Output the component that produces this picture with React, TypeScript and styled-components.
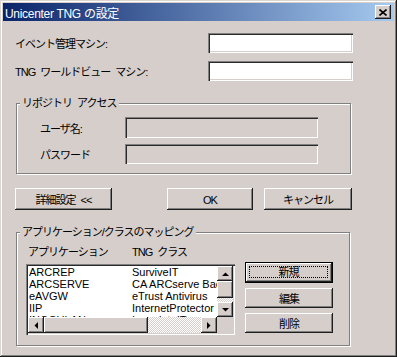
import React from 'react';
import styled, { createGlobalStyle } from 'styled-components';

const FACE = '#d6cecb';

const GlobalStyle = createGlobalStyle`
  html, body {
    margin: 0;
    padding: 0;
    background: ${FACE};
  }
  body {
    font-family: "Liberation Sans", "Noto Sans CJK JP", sans-serif;
    font-size: 11px;
    color: #000;
  }
`;

// ダイアログ外枠
const Window = styled.div`
  width: 397px;
  height: 357px;
  box-sizing: border-box;
  padding: 3px;
  background: ${FACE};
  box-shadow: inset -1px -1px #1e1e1e, inset 1px 1px #dcd6d2,
    inset -2px -2px #808080, inset 2px 2px #fff;
  display: flex;
  flex-direction: column;
`;

const TitleBar = styled.div`
  height: 18px;
  display: flex;
  align-items: center;
  justify-content: space-between;
  padding: 0 3px 0 2px;
  background: linear-gradient(to right, #0a246a, #a6caf0);
  color: #fff;
  font-size: 12px;
  letter-spacing: -0.3px;
`;

const Raised = `
  background: ${FACE};
  box-shadow: inset -1px -1px #1e1e1e, inset 1px 1px #fff,
    inset -2px -2px #808080, inset 2px 2px ${FACE};
`;

const JpText = `
  letter-spacing: -1px;
  word-spacing: 3px;
  line-height: 12px;
`;

const CloseBox = styled.div`
  width: 16px;
  height: 14px;
  ${Raised}
  display: flex;
  align-items: center;
  justify-content: center;
`;

const Body = styled.div`
  display: flex;
  flex-direction: column;
  padding: 12px 0 0 12px;
`;

const FieldRow = styled.div<{ $cols: string; $h: number }>`
  display: grid;
  grid-template-columns: ${p => p.$cols};
  align-items: center;
  height: ${p => p.$h}px;
`;

const Label = styled.span`
  ${JpText}
  padding-top: 2px;
`;

const TextBox = styled.div<{ $disabled?: boolean }>`
  height: 100%;
  box-sizing: border-box;
  background: ${p => (p.$disabled ? FACE : '#fff')};
  box-shadow: inset 1px 1px #808080, inset 2px 2px #2a2a2a,
    inset -1px -1px #fff, inset -2px -2px ${FACE};
`;

const Group = styled.div<{ $w: number; $h: number; $top: number }>`
  width: ${p => p.$w}px;
  height: ${p => p.$h}px;
  margin: ${p => p.$top}px 0 0 1px;
  box-sizing: border-box;
  border: 1px solid #808080;
  box-shadow: inset 1px 1px #fff, 1px 1px #fff;
  display: flex;
  flex-direction: column;
`;

const GroupTitle = styled.span`
  align-self: flex-start;
  margin: -7px 0 0 3px;
  padding: 0 2px;
  background: ${FACE};
  ${JpText}
`;

const RepoRows = styled.div`
  display: flex;
  flex-direction: column;
  gap: 6px;
  margin: 8px 0 0 23px;
`;

const ButtonRow = styled.div`
  display: flex;
  margin-top: 14px;
  height: 22px;
`;

const Button = styled.div<{ $w: number; $h?: number; $ml?: number }>`
  width: ${p => p.$w}px;
  height: ${p => p.$h ?? 22}px;
  margin-left: ${p => p.$ml ?? 0}px;
  box-sizing: border-box;
  ${Raised}
  display: flex;
  align-items: center;
  justify-content: center;
  ${JpText}
  padding-top: 1px;
`;

const DefaultButton = styled.div`
  width: 88px;
  height: 21px;
  box-sizing: border-box;
  border: 1px solid #000;
  ${Raised}
  display: flex;
  padding: 3px 4px 4px 3px;
`;

const FocusRing = styled.span`
  flex: 1;
  border: 1px dotted #000;
  display: flex;
  align-items: center;
  justify-content: center;
  ${JpText}
`;

const MappingBody = styled.div`
  display: flex;
  margin-left: 9px;
`;

const ListColumn = styled.div`
  display: flex;
  flex-direction: column;
`;

const Header = styled.div`
  display: grid;
  grid-template-columns: 104px 1fr;
  margin-top: 8px;
  padding-left: 2px;
  height: 12px;
  ${JpText}
`;

const ListBox = styled.div`
  margin-top: 6px;
  width: 209px;
  height: 71px;
  box-sizing: border-box;
  padding: 2px;
  background: #fff;
  box-shadow: inset 1px 1px #808080, inset 2px 2px #2a2a2a,
    inset -1px -1px #fff, inset -2px -2px ${FACE};
  display: grid;
  grid-template-columns: 1fr 16px;
  grid-template-rows: 1fr 16px;
`;

const Rows = styled.div`
  overflow: hidden;
  padding-left: 1px;
`;

const Row = styled.div`
  display: grid;
  grid-template-columns: 103px 1fr;
  height: 12px;
  line-height: 12px;
  white-space: nowrap;
  overflow: hidden;
`;

const VScroll = styled.div`
  display: grid;
  grid-template-rows: 15px 17px 1fr 15px;
`;

const HScroll = styled.div`
  display: grid;
  grid-template-columns: 16px 104px 1fr 16px;
`;

const Track = styled.div`
  background: repeating-conic-gradient(#fff 0 25%, ${FACE} 0 50%) 0 0 / 2px 2px;
`;

const ScrollPart = styled.div`
  ${Raised}
  display: flex;
  align-items: center;
  justify-content: center;
`;

const Corner = styled.div`
  background: ${FACE};
`;

const SideButtons = styled.div`
  display: flex;
  flex-direction: column;
  gap: 5px;
  margin: 24px 0 0 10px;
`;

type Dir = 'up' | 'down' | 'left' | 'right';

const Arrow: React.FC<{ dir: Dir }> = ({ dir }) => {
  const pts: Record<Dir, string> = {
    up: '0,4 7,4 3.5,0.5',
    down: '0,0 7,0 3.5,3.5',
    left: '4,0 4,7 0.5,3.5',
    right: '0,0 0,7 3.5,3.5',
  };
  const vertical = dir === 'up' || dir === 'down';
  return (
    <svg width={vertical ? 7 : 4} height={vertical ? 4 : 7} viewBox={vertical ? '0 0 7 4' : '0 0 4 7'}>
      <polygon points={pts[dir]} fill="#000" />
    </svg>
  );
};

const mappings = [
  ['ARCREP', 'SurviveIT'],
  ['ARCSERVE', 'CA ARCserve Backup'],
  ['eAVGW', 'eTrust Antivirus'],
  ['IIP', 'InternetProtector'],
  ['INOCULAN', 'InoculateIT'],
];

export default function App() {
  return (
    <>
      <GlobalStyle />
      <Window>
        <TitleBar>
          <span>Unicenter TNG の設定</span>
          <CloseBox>
            <svg width="8" height="7" viewBox="0 0 8 7">
              <path d="M0.5 0.5 L7.5 6.5 M7.5 0.5 L0.5 6.5" stroke="#000" strokeWidth="1.6" />
            </svg>
          </CloseBox>
        </TitleBar>
        <Body>
          <FieldRow $cols="193px 145px" $h={20}>
            <Label>イベント管理マシン:</Label>
            <TextBox />
          </FieldRow>
          <FieldRow $cols="193px 145px" $h={20} style={{ marginTop: 8 }}>
            <Label>TNG ワールドビュー マシン:</Label>
            <TextBox />
          </FieldRow>

          <Group $w={335} $h={71} $top={22}>
            <GroupTitle>リポジトリ アクセス</GroupTitle>
            <RepoRows>
              <FieldRow $cols="85px 193px" $h={21}>
                <Label>ユーザ名:</Label>
                <TextBox $disabled />
              </FieldRow>
              <FieldRow $cols="85px 193px" $h={20}>
                <Label>パスワード</Label>
                <TextBox $disabled />
              </FieldRow>
            </RepoRows>
          </Group>

          <ButtonRow>
            <Button $w={97}>詳細設定 &lt;&lt;</Button>
            <Button $w={86} $ml={55}>OK</Button>
            <Button $w={88} $ml={11}>キャンセル</Button>
          </ButtonRow>

          <Group $w={334} $h={114} $top={22}>
            <GroupTitle>アプリケーション/クラスのマッピング</GroupTitle>
            <MappingBody>
              <ListColumn>
                <Header>
                  <span>アプリケーション</span>
                  <span>TNG クラス</span>
                </Header>
                <ListBox>
                  <Rows>
                    {mappings.map(([app, cls]) => (
                      <Row key={app}>
                        <span>{app}</span>
                        <span>{cls}</span>
                      </Row>
                    ))}
                  </Rows>
                  <VScroll>
                    <ScrollPart><Arrow dir="up" /></ScrollPart>
                    <ScrollPart />
                    <Track />
                    <ScrollPart><Arrow dir="down" /></ScrollPart>
                  </VScroll>
                  <HScroll>
                    <ScrollPart><Arrow dir="left" /></ScrollPart>
                    <ScrollPart />
                    <Track />
                    <ScrollPart><Arrow dir="right" /></ScrollPart>
                  </HScroll>
                  <Corner />
                </ListBox>
              </ListColumn>
              <SideButtons>
                <DefaultButton>
                  <FocusRing>新規</FocusRing>
                </DefaultButton>
                <Button $w={88} $h={20}>編集</Button>
                <Button $w={88} $h={20}>削除</Button>
              </SideButtons>
            </MappingBody>
          </Group>
        </Body>
      </Window>
    </>
  );
}
